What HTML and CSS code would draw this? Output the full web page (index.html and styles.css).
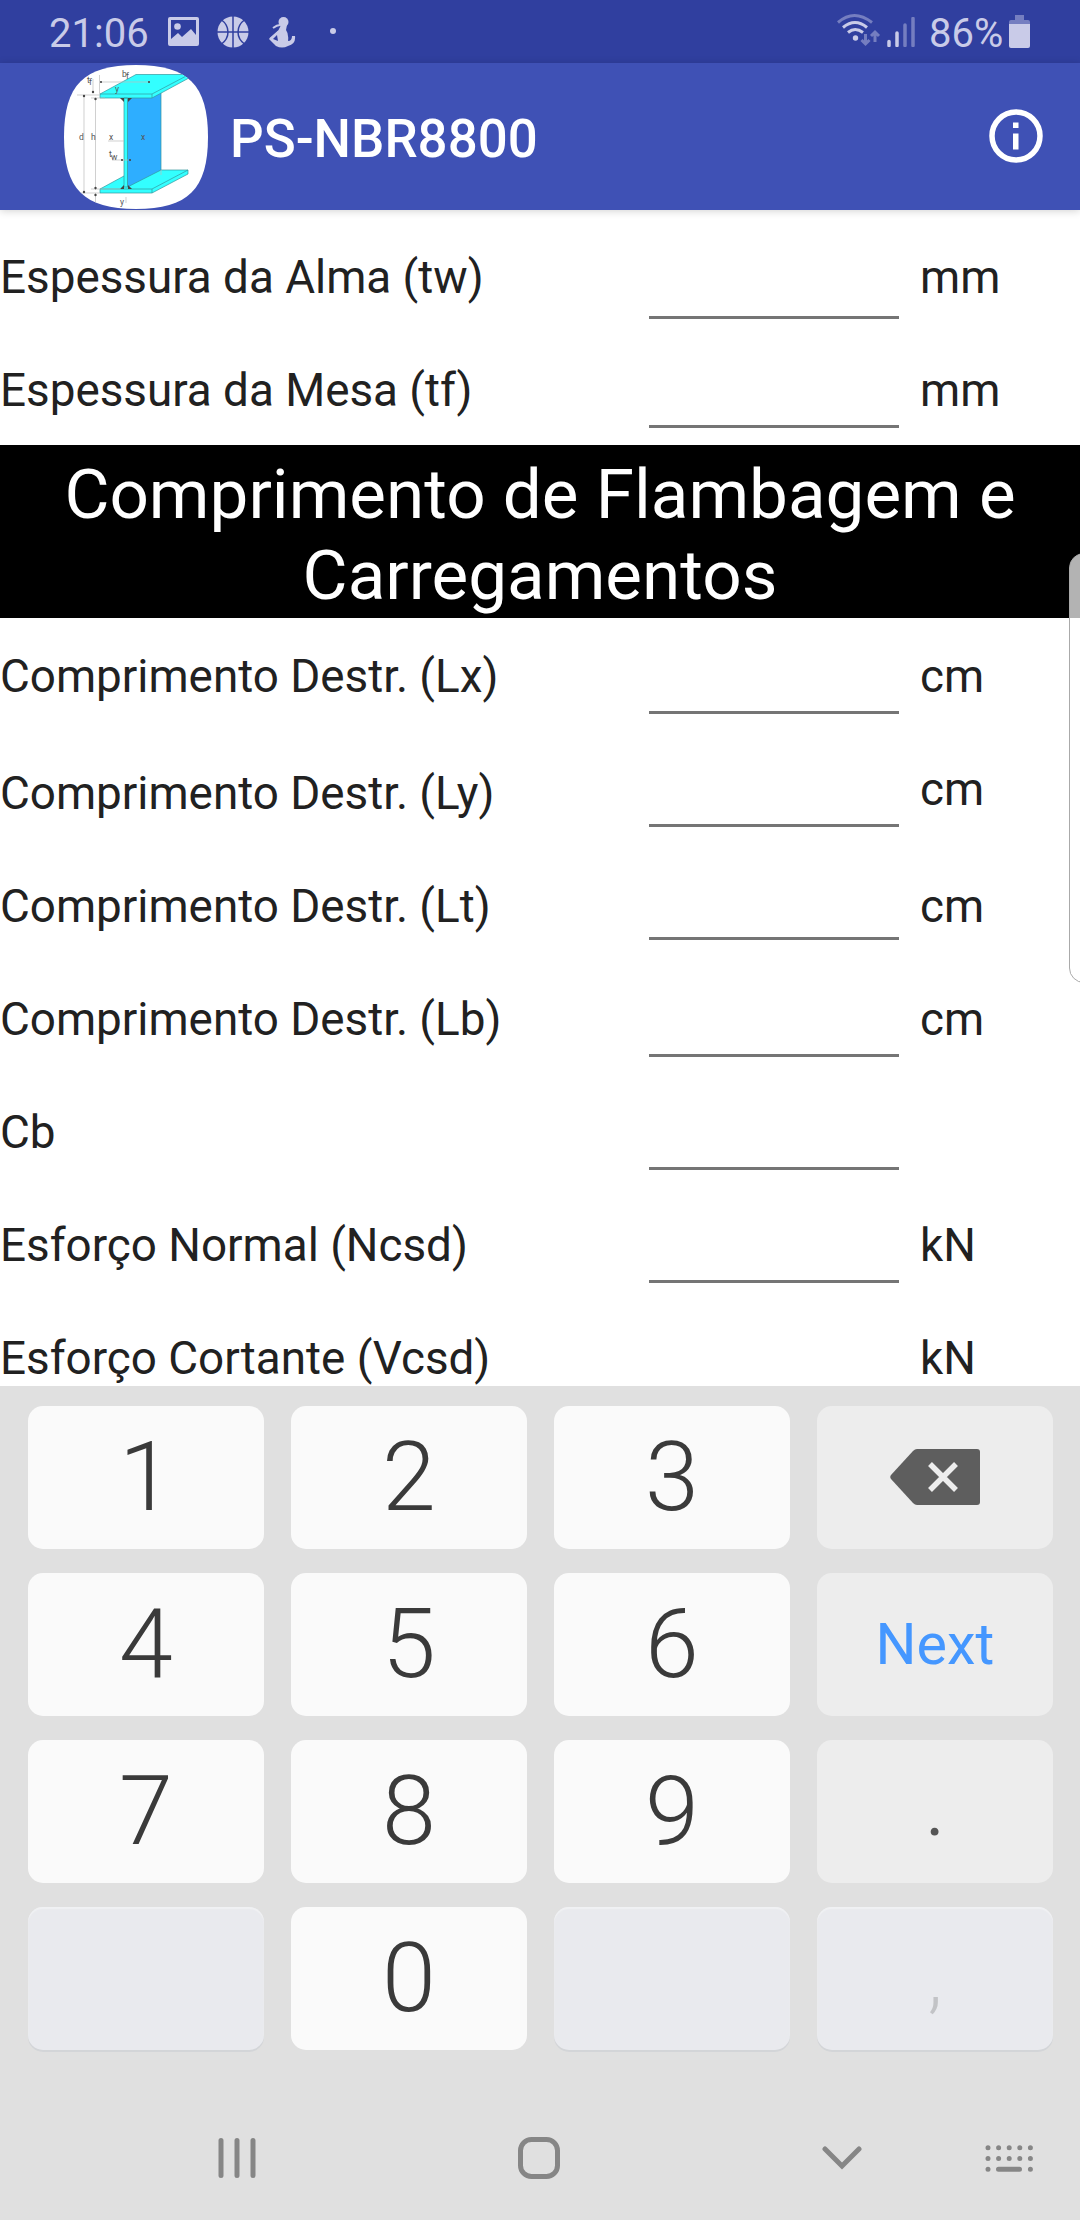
FILE: index.html
```
<!DOCTYPE html>
<html lang="pt-BR">
  <head>
    <meta charset="UTF-8" />
    <meta name="viewport" content="width=device-width, initial-scale=1.0" />
    <title>PS-NBR8800</title>
    <link rel="stylesheet" href="styles.css">
  </head>
  <body>

    <div class="status-bar">
      <span class="clock">21:06</span>
      <svg class="icon-picture" width="31" height="30" viewBox="0 0 31 30">
        <path fill-rule="evenodd" d="M2 0h27a2 2 0 0 1 2 2v25a2 2 0 0 1-2 2H2a2 2 0 0 1-2-2V2a2 2 0 0 1 2-2zM3 3v19l7-6 4 4 9-8 5 6V3z" />
        <circle cx="9.500" cy="9.500" r="3.300" />
      </svg>
      <svg class="icon-ball" width="32" height="32" viewBox="0 0 32 32">
        <circle cx="16" cy="16" r="15.500" />
        <path class="cut" d="M16 0v32M0 16h32M4 3.500q7 5 7 12.500T4 28.500M28 3.500q-7 5-7 12.500t7 12.500" />
      </svg>
      <svg class="icon-baby" width="28" height="31" viewBox="0 0 28 31">
        <circle cx="14.500" cy="5" r="5" />
        <path d="M12 8h6l-1 5q3 4 2 11 4 0 4-5h3q1 8-7 10-6 3-12 0L0 22l9-8z" />
        <path class="limb" d="M11 8q-3 0-7 3M1 22l9-8" />
        <path class="cut thin" d="M4 22l4-4 1 6z" />
      </svg>
      <span class="dot"></span>
      <svg class="icon-wifi" width="44" height="34" viewBox="0 0 44 34">
        <path class="faint" d="M1 9.500q16-14 34 0" />
        <path d="M6 14.500q12-10 24 0M11 19.500q7-6 15 0" />
        <circle cx="18.500" cy="25" r="2.700" />
        <path class="faint arrows" d="M28.500 21v10M24.500 27l4 4 4-4M38 29V19M34 23l4-4 4 4" />
      </svg>
      <svg class="icon-signal" width="28" height="30" viewBox="0 0 28 30">
        <path d="M2 24.500v4M10 16v12.500" />
        <path class="faint" d="M18 8v20.500M26 1.500v27" />
      </svg>
      <span class="battery-text">86%</span>
      <svg class="icon-battery" width="21" height="33" viewBox="0 0 21 33">
        <path class="faint" d="M6 0h9v5h4a2 2 0 0 1 2 2v2H0V7a2 2 0 0 1 2-2h4z" />
        <path d="M0 9h21v22a2 2 0 0 1-2 2H2a2 2 0 0 1-2-2z" />
      </svg>
    </div>

    <div class="app-bar">
      <svg class="logo" width="144" height="144" viewBox="0 0 144 144">
        <defs>
          <clipPath id="logo-shape">
            <path d="M72 0C124 0 144 20 144 72S124 144 72 144 0 124 0 72 20 0 72 0z" />
          </clipPath>
        </defs>
        <g clip-path="url(#logo-shape)">
          <rect width="144" height="144" fill="#fff" />
          <g class="beam">
            <path d="M36 124l35-19h53v4l-36 19H36z" />
            <path class="web" d="M63.500 33L97 28v77l-33.500 17z" />
            <path d="M60 33h3.500v89H60zM36 29L72 9.500h56l-4 4L88 33H36z" />
            <path class="fold" d="M36 29h52l38-20M88 29v4M36 124h52l36-19M88 124v4" />
          </g>
          <path class="corners" d="M56 33h4v4zM64 33h4l-4 4zM56 124h4v-4zM64 124h4l-4-4z" />
          <path class="dims" d="M20 30v98M31.500 33v92M29 14v14M35.500 10v19M36 17h50M13 30h23M27 33h14M27 124h30M16 128h20M44 76h16M48 95h16M31.500 128v10M62 132v6M97 105v5" />
          <g class="marks">
            <circle cx="20" cy="31" r="1.200" /><circle cx="20" cy="127" r="1.200" />
            <circle cx="31.500" cy="34" r="1.200" /><circle cx="31.500" cy="123" r="1.200" />
            <circle cx="29" cy="27" r="1.200" /><circle cx="37" cy="17" r="1.100" />
            <circle cx="85" cy="17" r="1.100" /><circle cx="58" cy="95" r="1.100" />
            <circle cx="66" cy="95" r="1.100" /><circle cx="31.500" cy="130" r="1.200" />
          </g>
          <g class="logo-text">
            <text x="58" y="12">b</text><text x="62" y="14">f</text>
            <text x="23" y="18">t</text><text x="25" y="20">f</text>
            <text x="51" y="27">y</text><text x="15" y="75">d</text>
            <text x="27" y="75">h</text><text x="45" y="75">x</text>
            <text x="77" y="75">x</text><text x="45" y="92">t</text>
            <text x="47" y="95">w</text><text x="56" y="140">y</text>
          </g>
        </g>
      </svg>
      <h1>PS-NBR8800</h1>
      <svg class="icon-info" width="54" height="54" viewBox="0 0 54 54">
        <circle cx="27" cy="27" r="24" />
        <path d="M24 13.500h5.500V19H24zM24 24.500h5.500v16H24z" />
      </svg>
    </div>

    <div class="form">
      <div class="row row-tw">
        <label for="tw">Espessura da Alma (tw)</label>
        <input type="text" id="tw" />
        <span class="unit">mm</span>
      </div>
      <div class="row row-tf">
        <label for="tf">Espessura da Mesa (tf)</label>
        <input type="text" id="tf" />
        <span class="unit">mm</span>
      </div>
      <h2>Comprimento de Flambagem e Carregamentos</h2>
      <div class="row row-lx">
        <label for="lx">Comprimento Destr. (Lx)</label>
        <input type="text" id="lx" />
        <span class="unit">cm</span>
      </div>
      <div class="row row-ly">
        <label for="ly">Comprimento Destr. (Ly)</label>
        <input type="text" id="ly" />
        <span class="unit">cm</span>
      </div>
      <div class="row row-lt">
        <label for="lt">Comprimento Destr. (Lt)</label>
        <input type="text" id="lt" />
        <span class="unit">cm</span>
      </div>
      <div class="row row-lb">
        <label for="lb">Comprimento Destr. (Lb)</label>
        <input type="text" id="lb" />
        <span class="unit">cm</span>
      </div>
      <div class="row">
        <label for="cb">Cb</label>
        <input type="text" id="cb" />
        <span class="unit"></span>
      </div>
      <div class="row">
        <label for="ncsd">Esforço Normal (Ncsd)</label>
        <input type="text" id="ncsd" />
        <span class="unit">kN</span>
      </div>
      <div class="row">
        <label for="vcsd">Esforço Cortante (Vcsd)</label>
        <input type="text" id="vcsd" />
        <span class="unit">kN</span>
      </div>
    </div>

    <div class="edge-panel"></div>

    <div class="keyboard">
      <div class="keys">
        <button>1</button>
        <button>2</button>
        <button>3</button>
        <button class="side">
          <svg width="90" height="56" viewBox="0 0 90 56">
            <path class="delete-shape" d="M27 0h60a3 3 0 0 1 3 3v50a3 3 0 0 1-3 3H27q-2 0-4-2L1 30q-1.500-2 0-4L23 2q2-2 4-2z" />
            <path class="delete-cross" d="M40 15l26 26M66 15L40 41" />
          </svg>
        </button>
        <button>4</button>
        <button>5</button>
        <button>6</button>
        <button class="side next">Next</button>
        <button>7</button>
        <button>8</button>
        <button>9</button>
        <button class="side point">.</button>
        <button class="off"></button>
        <button>0</button>
        <button class="off"></button>
        <button class="off comma">,</button>
      </div>
    </div>

    <div class="nav-bar">
      <svg class="nav-recent" width="38" height="40" viewBox="0 0 38 40">
        <path d="M3 2.500v35M19 2.500v35M35 2.500v35" />
      </svg>
      <svg class="nav-home" width="42" height="42" viewBox="0 0 42 42">
        <rect x="2.500" y="2.500" width="37" height="37" rx="11" />
      </svg>
      <svg class="nav-back" width="40" height="24" viewBox="0 0 40 24">
        <path d="M3 3l17 17L37 3" />
      </svg>
      <svg class="nav-keyboard" width="49" height="27" viewBox="0 0 49 27">
        <path class="key-dots" d="M3 2.800h42.500M3 13.500h42.500" />
        <path d="M3 24.200h.01M13.500 24.200h21M45.400 24.200h.01" />
      </svg>
    </div>

  </body>
</html>
```
FILE: styles.css
```
* {
  box-sizing: border-box;
}

body {
  margin: 0;
  width: 1080px;
  height: 2220px;
  overflow: hidden;
  position: relative;
  display: flex;
  flex-direction: column;
  font-family: Roboto, sans-serif;
  background: #fff;
}

svg {
  flex: none;
}

/* status bar */
.status-bar {
  height: 63px;
  flex: none;
  display: flex;
  align-items: flex-start;
  padding: 0 50px 0 49px;
  background: #303f9f;
  color: #c9cbe8;
  fill: #c9cbe8;
  font-size: 40px;
  line-height: 67px;
}

.clock {
  width: 119px;
}

.icon-picture {
  margin-top: 17px;
}

.icon-ball {
  margin: 16px 0 0 18px;
}

.icon-baby {
  margin: 17px 0 0 20px;
}

.cut {
  fill: none;
  stroke: #303f9f;
  stroke-width: 1.5;
}

.cut.thin {
  fill: #303f9f;
  stroke: none;
}

.limb {
  fill: none;
  stroke: #c9cbe8;
  stroke-width: 2;
}

.dot {
  width: 6px;
  height: 6px;
  margin: 28px auto 0 33px;
  border-radius: 50%;
  background: #c9cbe8;
}

.icon-wifi {
  margin-top: 13px;
}

.icon-wifi path,
.icon-signal path {
  fill: none;
  stroke: #c9cbe8;
  stroke-width: 3;
}

.icon-signal path {
  stroke-width: 3.5;
  stroke-linecap: round;
}

.icon-signal {
  margin: 17px 14px 0 6px;
}

.faint {
  opacity: 0.45;
}

.battery-text {
  width: 80px;
}

.icon-battery {
  margin-top: 15px;
}

/* app bar */
.app-bar {
  height: 147px;
  flex: none;
  display: flex;
  align-items: center;
  padding: 0 37px 0 64px;
  background: #3f51b5;
  box-shadow: 0 1px 8px rgba(0, 0, 0, 0.18);
  position: relative;
}

h1 {
  flex: 1;
  margin: 4px 0 0 22px;
  color: #fff;
  font-size: 52.8px;
  font-weight: 500;
}

.beam path {
  fill: #33ffff;
  stroke: #35969c;
  stroke-width: 0.7;
}

.beam .web {
  fill: #2eaeff;
}

.beam .fold {
  fill: none;
}

.corners,
.marks {
  fill: #444;
}

.dims {
  fill: none;
  stroke: #bbb;
  stroke-width: 0.7;
}

.logo-text {
  fill: #555;
  font-size: 8.5px;
}

.icon-info {
  fill: #fff;
  margin-bottom: 2px;
}

.icon-info circle {
  fill: none;
  stroke: #fff;
  stroke-width: 5.5;
}

/* form */
.form {
  height: 1176px;
  flex: none;
  overflow: hidden;
  color: #212121;
}

.row {
  height: 113px;
  display: grid;
  grid-template-columns: 649px 250px 1fr;
  align-items: start;
  font-size: 45.8px;
  line-height: 56px;
}

.row label,
.row .unit {
  margin-top: 48px;
}

.row .unit {
  padding-left: 21px;
}

.row input {
  height: 100%;
  width: 250px;
  padding: 0;
  border: none;
  border-bottom: 3px solid #757575;
  background: none;
  outline: none;
}

.row-tw,
.row-tf {
  height: 109px;
}

.row-tw label,
.row-tw .unit {
  margin-top: 40px;
}

.row-tf label,
.row-tf .unit {
  margin-top: 44px;
}

.row-lx {
  height: 96px;
}

.row-lx label,
.row-lx .unit {
  margin-top: 31px;
}

.row-ly label,
.row-lt label,
.row-lt .unit,
.row-lb label,
.row-lb .unit {
  margin-top: 52px;
}

.row-lb {
  height: 117px;
}

h2 {
  height: 173px;
  margin: 17px 0 0;
  padding: 9px 40px 0;
  background: #000;
  color: #fff;
  font-size: 69.2px;
  font-weight: 400;
  line-height: 81px;
  text-align: center;
}

/* samsung edge handle */
.edge-panel {
  position: absolute;
  left: 1069px;
  top: 553px;
  width: 30px;
  height: 430px;
  border: 1px solid #aaa;
  border-radius: 16px;
  background: rgba(255, 255, 255, 0.7);
}

/* keyboard */
.keyboard {
  height: 734px;
  flex: none;
  padding: 20px 27px 0 28px;
  background: #e0e0e0;
}

.keys {
  display: grid;
  grid-template-columns: repeat(4, 236px);
  grid-auto-rows: 143px;
  column-gap: 27px;
  row-gap: 24px;
}

.keys button {
  display: flex;
  align-items: center;
  justify-content: center;
  padding: 0 0 1px;
  border: none;
  border-radius: 15px;
  background: #fafafa;
  color: #3a3a3a;
  font-family: Roboto, sans-serif;
  font-size: 97px;
  font-weight: 300;
}

.keys .side {
  background: #ededed;
}

.keys .next {
  color: #4597ff;
  font-size: 57.5px;
  font-weight: 400;
}

.keys .point {
  color: #555;
  font-size: 70px;
  font-weight: 400;
}

.keys .off {
  background: #e9eaee;
  box-shadow: 0 2px 0 #d3d5d8, inset 0 2px 1px #f0f1f3;
}

.keys .comma {
  color: #c2c3c6;
  font-size: 76px;
}

.delete-shape {
  fill: #5e5e5e;
}

.delete-cross {
  stroke: #ededed;
  stroke-width: 5.5;
}

/* navigation bar */
.nav-bar {
  flex: 1;
  display: flex;
  align-items: center;
  padding: 0 0 24px 218px;
  background: #e0e0e0;
}

.nav-bar svg {
  fill: none;
  stroke: #868686;
  stroke-width: 5;
  stroke-linecap: round;
}

.nav-home {
  margin-left: 262px;
}

.nav-back {
  margin-left: 262px;
}

.nav-keyboard {
  margin-left: 123px;
}

.nav-bar .key-dots {
  stroke-dasharray: 0 10.6;
}
```
